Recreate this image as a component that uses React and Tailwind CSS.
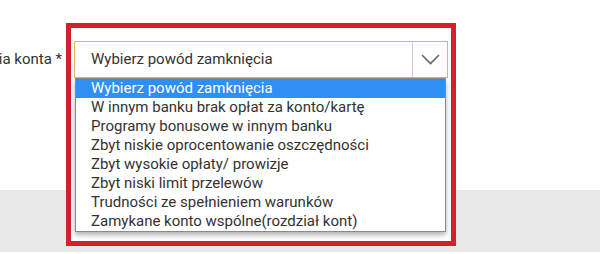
import { useState } from "react"

const reasons = [
  "Wybierz powód zamknięcia",
  "W innym banku brak opłat za konto/kartę",
  "Programy bonusowe w innym banku",
  "Zbyt niskie oprocentowanie oszczędności",
  "Zbyt wysokie opłaty/ prowizje",
  "Zbyt niski limit przelewów",
  "Trudności ze spełnieniem warunków",
  "Zamykane konto wspólne(rozdział kont)",
]

export default function App() {
  const [active, setActive] = useState(0)

  return (
    <div className="relative w-[600px] h-[254px] overflow-hidden bg-white font-['Roboto',sans-serif] text-[15px] text-[#333]">
      {/* page content */}
      <div className="h-[190px] bg-white pt-[41px]">
        <div className="flex items-center justify-end h-[36px] w-[62px]">
          <label className="whitespace-nowrap shrink-0">Powód zamknięcia konta *</label>
        </div>
      </div>
      <div className="h-[62px] bg-[#e9e9e9]" />

      {/* highlight frame */}
      <div className="absolute left-[66px] top-[23px] w-[390px] h-[223px] border-[5px] border-[#d3202d] bg-white pl-[3px] pt-[13px]">
        <div className="relative w-[374px]">
          <div className="flex h-[37px] border border-[#dfb463] bg-white">
            <div className="flex-1 flex items-center pl-[16px]">Wybierz powód zamknięcia</div>
            <div className="w-[35px] border-l border-[#cfcfcf] flex items-center justify-center">
              <svg width="19" height="11" viewBox="0 0 19 11" fill="none">
                <polyline points="1,1 9.5,9.5 18,1" stroke="#666" strokeWidth="1.6" />
              </svg>
            </div>
          </div>

          <ul className="absolute left-[1px] top-[37px] w-[371px] border border-[#8a8a8a] bg-white shadow-[0_3px_5px_rgba(0,0,0,0.3)]">
            {reasons.map((r, i) => (
              <li
                key={r}
                onMouseEnter={() => setActive(i)}
                className={`h-[19px] leading-[19px] pl-[15px] whitespace-nowrap ${
                  i === active ? "bg-[#2f8ff5] text-white" : "text-[#333]"
                }`}
              >
                {r}
              </li>
            ))}
          </ul>
        </div>
      </div>
    </div>
  )
}
